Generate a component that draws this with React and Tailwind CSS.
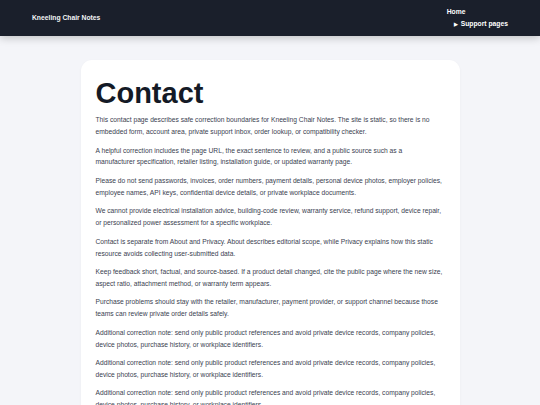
const paragraphs = [
  "This contact page describes safe correction boundaries for Kneeling Chair Notes. The site is static, so there is no embedded form, account area, private support inbox, order lookup, or compatibility checker.",
  "A helpful correction includes the page URL, the exact sentence to review, and a public source such as a manufacturer specification, retailer listing, installation guide, or updated warranty page.",
  "Please do not send passwords, invoices, order numbers, payment details, personal device photos, employer policies, employee names, API keys, confidential device details, or private workplace documents.",
  "We cannot provide electrical installation advice, building-code review, warranty service, refund support, device repair, or personalized power assessment for a specific workplace.",
  "Contact is separate from About and Privacy. About describes editorial scope, while Privacy explains how this static resource avoids collecting user-submitted data.",
  "Keep feedback short, factual, and source-based. If a product detail changed, cite the public page where the new size, aspect ratio, attachment method, or warranty term appears.",
  "Purchase problems should stay with the retailer, manufacturer, payment provider, or support channel because those teams can review private order details safely.",
  "Additional correction note: send only public product references and avoid private device records, company policies, device photos, purchase history, or workplace identifiers.",
  "Additional correction note: send only public product references and avoid private device records, company policies, device photos, purchase history, or workplace identifiers.",
  "Additional correction note: send only public product references and avoid private device records, company policies, device photos, purchase history, or workplace identifiers.",
];

const Header = () => {
  return (
    <header className="relative z-10 flex h-[36px] items-center justify-between bg-[#1a1f2b] px-[32px] shadow-[0_2px_8px_rgba(0,0,0,0.22)]">
      <a href="#" className="text-[6.75px] font-bold text-[#f3f4f6]">
        Kneeling Chair Notes
      </a>
      <nav className="flex flex-col text-[6.75px] font-bold leading-[1.75] text-white">
        <a href="#">Home</a>
        <div className="pl-[7px]">
          <span className="mr-[3px] text-[5px]">▶</span>
          Support pages
        </div>
      </nav>
    </header>
  );
};

const App = () => {
  return (
    <div
      className="min-h-[405px] bg-[#f4f5f9]"
      style={{ fontFamily: '"Liberation Sans", Arial, sans-serif' }}
    >
      <Header />
      <main className="px-4 pt-[24px] pb-8">
        <article className="mx-auto w-[379px] rounded-[11px] bg-white pl-[15px] pr-[17px] pt-[17px] pb-4 shadow-[0_1px_3px_rgba(0,0,0,0.04)]">
          <h1 className="mb-[4px] text-[29px] font-bold leading-[1.15] text-[#141a26]">
            Contact
          </h1>
          {paragraphs.map((text, i) => (
            <p
              key={i}
              className="mb-[6.75px] text-[6.7px] leading-[11.8px] text-[#3a4150]"
            >
              {text}
            </p>
          ))}
        </article>
      </main>
    </div>
  );
};

export default App;
